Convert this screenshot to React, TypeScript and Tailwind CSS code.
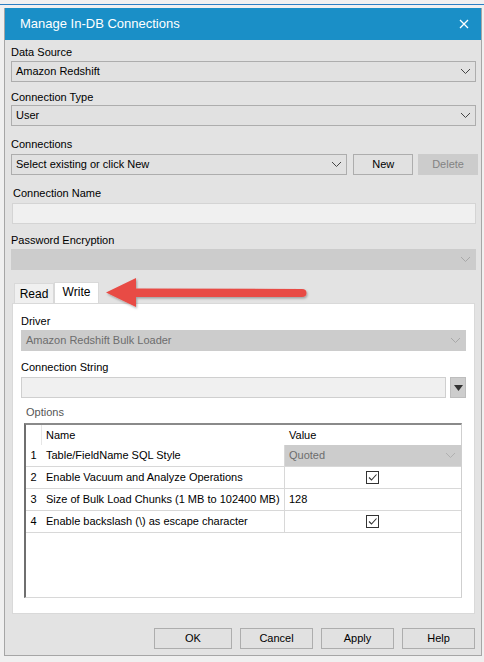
import React from 'react';

const font = { fontFamily: '"Liberation Sans", Arial, sans-serif' };

function Chevron({ color = '#444' }: { color?: string }) {
  return (
    <svg width="11" height="7" viewBox="0 0 11 7" className="shrink-0">
      <path d="M1 1 L5.5 5.5 L10 1" fill="none" stroke={color} strokeWidth="1" />
    </svg>
  );
}

function Combo({ text, disabled, className = '' }: { text?: string; disabled?: boolean; className?: string }) {
  return (
    <div
      className={`flex h-[21px] items-center justify-between border pl-[4px] pr-[4px] text-[11px] ${
        disabled ? 'border-[#cccccc] bg-[#cccccc] text-[#6d6d6d]' : 'border-[#adadad] bg-[#e1e1e1] text-black'
      } ${className}`}
    >
      <span>{text}</span>
      <Chevron color={disabled ? '#a8a8a8' : '#444'} />
    </div>
  );
}

function Check() {
  return (
    <div className="flex h-[13px] w-[13px] items-center justify-center border border-[#333] bg-white">
      <svg width="11" height="11" viewBox="0 0 11 11">
        <path d="M2 5.5 L4.5 8 L9.5 2.5" fill="none" stroke="#333" strokeWidth="1.1" />
      </svg>
    </div>
  );
}

function Btn({ label, w, disabled }: { label: string; w: string; disabled?: boolean }) {
  return (
    <div
      className={`flex h-[21px] items-center justify-center border text-[11px] ${w} ${
        disabled ? 'border-[#cccccc] bg-[#cccccc] text-[#838383]' : 'border-[#adadad] bg-[#e1e1e1] text-black'
      }`}
    >
      {label}
    </div>
  );
}

const rows = [
  { n: '1', name: 'Table/FieldName SQL Style', kind: 'combo' },
  { n: '2', name: 'Enable Vacuum and Analyze Operations', kind: 'check' },
  { n: '3', name: 'Size of Bulk Load Chunks (1 MB to 102400 MB)', kind: 'text' },
  { n: '4', name: 'Enable backslash (\\) as escape character', kind: 'check' },
];

export default function App() {
  return (
    <div className="relative h-[662px] w-[484px] overflow-hidden bg-[#f0f0f0]" style={font}>
      <div className="h-[4px]" />
      <div className="h-px bg-[#2b7fc4]" />
      <div className="h-[3px]" />

      <div className="ml-[4px] flex h-[648px] w-[478px] flex-col border border-[#a6a6a6] border-t-0 bg-[#e3e3e3]">
        <div className="flex h-[32px] items-center justify-between bg-[#1a8fc7] pl-[15px] pr-[12px] text-white">
          <span className="text-[13px]">Manage In-DB Connections</span>
          <svg width="10" height="10" viewBox="0 0 10 10">
            <path d="M1 1 L9 9 M9 1 L1 9" stroke="white" strokeWidth="1.3" />
          </svg>
        </div>

        <div className="flex flex-col pl-[6px] pr-[5px] text-[11px] text-black">
          <div className="mt-[4px] h-[16px] leading-[16px]">Data Source</div>
          <Combo text="Amazon Redshift" className="mt-px" />
          <div className="mt-[7px] h-[16px] leading-[16px]">Connection Type</div>
          <Combo text="User" />
          <div className="mt-[10px] h-[16px] leading-[16px]">Connections</div>
          <div className="-mr-[2px] mt-[2px] flex gap-[5px]">
            <Combo text="Select existing or click New" className="mr-px w-[337px]" />
            <Btn label="New" w="w-[60px]" />
            <Btn label="Delete" w="w-[60px]" disabled />
          </div>
          <div className="ml-[2px] mt-[10px] h-[16px] leading-[16px]">Connection Name</div>
          <div className="ml-px mt-[2px] h-[21px] border border-[#d4d4d4] bg-[#f0f0f0]" />
          <div className="mt-[8px] h-[16px] leading-[16px]">Password Encryption</div>
          <Combo disabled className="mt-px" />

          <div className="ml-[3px] mt-[12px] flex items-end">
            <div className="flex h-[20px] w-[40px] items-center justify-center border border-b-0 border-[#d9d9d9] bg-[#f0f0f0] text-[12px]">
              Read
            </div>
            <div className="-mb-px flex h-[22px] w-[45px] items-center justify-center border border-b-0 border-[#d9d9d9] bg-white pb-[3px] text-[12px]">
              Write
            </div>
          </div>

          <div className="ml-px mr-px flex h-[311px] flex-col border border-[#d9d9d9] bg-white pl-[8px] pr-[8px]">
            <div className="mt-[9px] h-[16px] leading-[16px]">Driver</div>
            <Combo disabled text="Amazon Redshift Bulk Loader" className="mt-px" />
            <div className="mt-[8px] h-[16px] leading-[16px]">Connection String</div>
            <div className="mt-[2px] flex items-center gap-[4px]">
              <div className="h-[21px] flex-1 border border-[#cfcfcf] bg-[#f0f0f0]" />
              <div className="flex h-[21px] w-[16px] items-center justify-center border border-[#bdbdbd] bg-[#cdcdcd]">
                <svg width="9" height="6" viewBox="0 0 9 6">
                  <path d="M0 0 H9 L4.5 6 Z" fill="#333" />
                </svg>
              </div>
            </div>
            <div className="ml-[5px] mt-[6px] h-[16px] leading-[16px] text-[#555]">Options</div>
            <div className="ml-[3px] mr-[4px] mt-[3px] flex h-[175px] flex-col border-l-2 border-t-2 border-r border-b border-l-[#6f6f6f] border-t-[#8a8a8a] border-r-[#cfcfcf] border-b-[#d8d8d8] bg-white">
              <div className="flex h-[20px]">
                <div className="w-[15px]" />
                <div className="flex w-[244px] items-center border-l border-[#e6e6e6] pl-[4px]">Name</div>
                <div className="flex flex-1 items-center pl-[4px]">Value</div>
              </div>
              {rows.map((r) => (
                <div key={r.n} className="flex h-[22px] border-b border-[#d8d8d8]">
                  <div className="flex w-[15px] items-center justify-center">{r.n}</div>
                  <div className="flex w-[244px] items-center border-r border-[#d8d8d8] pl-[5px]">{r.name}</div>
                  <div className="flex flex-1 items-center">
                    {r.kind === 'combo' && (
                      <div className="flex h-full w-full items-center justify-between bg-[#cccccc] pl-[4px] pr-[5px] text-[#6d6d6d]">
                        <span>Quoted</span>
                        <Chevron color="#b0b0b0" />
                      </div>
                    )}
                    {r.kind === 'check' && (
                      <div className="flex w-full justify-center pr-[2px]">
                        <Check />
                      </div>
                    )}
                    {r.kind === 'text' && <span className="pl-[4px]">128</span>}
                  </div>
                </div>
              ))}
            </div>
          </div>

          <div className="mt-[14px] flex justify-end gap-[8px] pr-px">
            <Btn label="OK" w="w-[78px]" />
            <Btn label="Cancel" w="w-[73px]" />
            <Btn label="Apply" w="w-[73px]" />
            <Btn label="Help" w="w-[73px]" />
          </div>
        </div>
      </div>

      <svg className="absolute left-[100px] top-[274px]" width="215" height="40" viewBox="100 274 215 40">
        <defs>
          <filter id="sh" x="-10%" y="-30%" width="120%" height="160%">
            <feDropShadow dx="1" dy="1.5" stdDeviation="1.2" floodColor="#000" floodOpacity="0.3" />
          </filter>
        </defs>
        <g filter="url(#sh)" fill="#e84b45">
          <path d="M106 292.5 L136 278 L136 288.5 L302 289 Q306.5 289 306.5 293 Q306.5 297 302 297 L136 297 L136 307 Z" />
        </g>
      </svg>
    </div>
  );
}
